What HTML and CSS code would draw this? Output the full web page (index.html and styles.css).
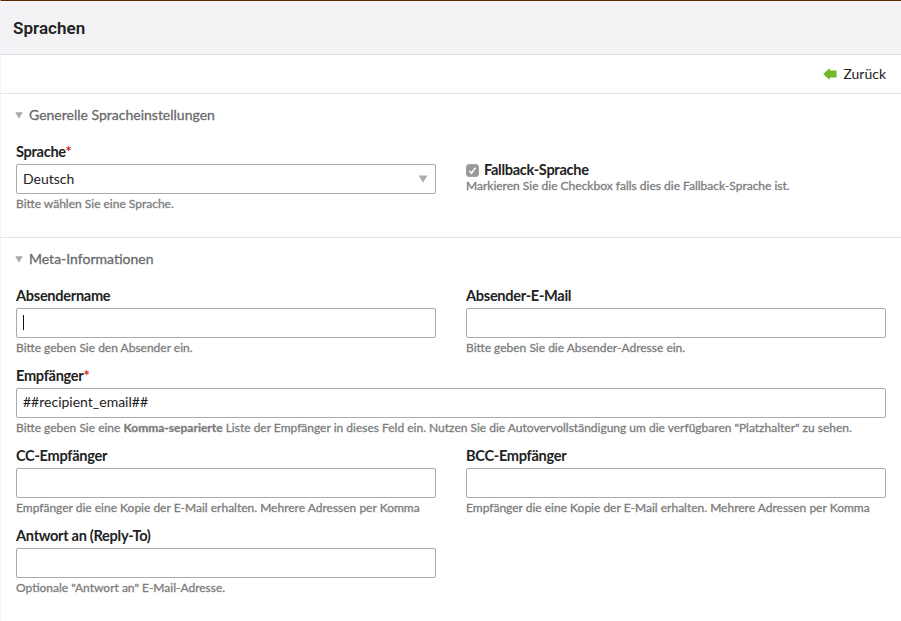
FILE: index.html
```html
<!DOCTYPE html>
<html lang="de">
<head>
<meta charset="utf-8">
<title>Sprachen</title>
<link rel="stylesheet" href="styles.css">
</head>
<body>
<main class="main">
  <h1 class="headline">Sprachen</h1>
  <nav class="buttons">
    <a class="back"><svg width="14" height="12" viewBox="0 0 14 12"><path d="M0.2 6 6.8 0V2.5h6.8v7H6.8v2.5z" fill="#72b82f"/></svg><span>Zurück</span></a>
  </nav>
  <form>
    <section class="box box-general">
      <h2 class="legend"><svg class="caret" width="8" height="7" viewBox="0 0 8 7"><path d="M.3.3h7.4L4 6.7z" fill="#a8a8a8"/></svg><span>Generelle Spracheinstellungen</span></h2>
      <div class="fields">
        <div class="widget">
          <label class="label">Sprache<span class="req">*</span></label>
          <div class="control select"><span>Deutsch</span><svg width="10" height="8" viewBox="0 0 10 8"><path d="M.6.5h8.8L5 7.7z" fill="#acacac"/></svg></div>
          <p class="help">Bitte wählen Sie eine Sprache.</p>
        </div>
        <div class="widget check">
          <div class="check-row"><svg width="13" height="13" viewBox="0 0 13 13"><rect x=".5" y=".5" width="12" height="12" rx="2.5" fill="#98989a" stroke="#a4a4a6"/><path d="M3.4 6.8 5.5 9.2 9.5 3.6" fill="none" stroke="#fff" stroke-width="1.6"/></svg><label class="label">Fallback-Sprache</label></div>
          <p class="help">Markieren Sie die Checkbox falls dies die Fallback-Sprache ist.</p>
        </div>
      </div>
    </section>
    <section class="box">
      <h2 class="legend"><svg class="caret" width="8" height="7" viewBox="0 0 8 7"><path d="M.3.3h7.4L4 6.7z" fill="#a8a8a8"/></svg><span>Meta-Informationen</span></h2>
      <div class="fields">
        <div class="widget">
          <label class="label">Absendername</label>
          <div class="control"><span class="cursor"></span></div>
          <p class="help">Bitte geben Sie den Absender ein.</p>
        </div>
        <div class="widget">
          <label class="label">Absender-E-Mail</label>
          <div class="control"></div>
          <p class="help">Bitte geben Sie die Absender-Adresse ein.</p>
        </div>
        <div class="widget wide">
          <label class="label">Empfänger<span class="req">*</span></label>
          <div class="control text">##recipient_email##</div>
          <p class="help">Bitte geben Sie eine <strong>Komma-separierte</strong> Liste der Empfänger in dieses Feld ein. Nutzen Sie die Autovervollständigung um die verfügbaren "Platzhalter" zu sehen.</p>
        </div>
        <div class="widget">
          <label class="label">CC-Empfänger</label>
          <div class="control"></div>
          <p class="help">Empfänger die eine Kopie der E-Mail erhalten. Mehrere Adressen per Komma</p>
        </div>
        <div class="widget">
          <label class="label">BCC-Empfänger</label>
          <div class="control"></div>
          <p class="help">Empfänger die eine Kopie der E-Mail erhalten. Mehrere Adressen per Komma</p>
        </div>
        <div class="widget">
          <label class="label">Antwort an (Reply-To)</label>
          <div class="control"></div>
          <p class="help">Optionale "Antwort an" E-Mail-Adresse.</p>
        </div>
      </div>
    </section>
  </form>
</main>
</body>
</html>
```
FILE: styles.css
```css
* { box-sizing: border-box; }
body {
  margin: 0;
  height: 621px;
  overflow: hidden;
  background: #fff;
  border-top: 1px solid #5c2800;
  border-left: 1px solid #f0f3fe;
  font: 14px/20px Lato, sans-serif;
  color: #222;
}
h1, h2, p { margin: 0; }
.headline {
  height: 54px;
  padding-left: 12px;
  background: #f3f3f5;
  border-bottom: 1px solid #dedee0;
  border-top-left-radius: 3px;
  font: 600 17px/54px Roboto, sans-serif;
  letter-spacing: .05px;
}
.buttons {
  height: 39px;
  padding-right: 15px;
  border-bottom: 1px solid #e4e4e6;
  display: flex;
  justify-content: flex-end;
}
.back { display: flex; align-items: center; gap: 6px; }
.box { padding: 11px 15px 0; }
.box-general { height: 144px; border-bottom: 1px solid #e4e4e6; }
.legend {
  display: flex;
  align-items: center;
  gap: 6px;
  height: 20px;
  font-size: 14px;
  font-weight: 400;
  color: #6a6a6c;
  -webkit-text-stroke: .3px;
}
.caret { margin-left: -1px; }
.fields {
  display: grid;
  grid-template-columns: 420px 420px;
  column-gap: 30px;
  padding-top: 17px;
}
.widget { height: 80px; }
.wide { grid-column: 1 / 3; }
.label {
  display: block;
  height: 22px;
  font-size: 14.6px;
  line-height: 20px;
  font-weight: 700;
  letter-spacing: -.31px;
  white-space: nowrap;
}
.req { color: #d22; }
.control {
  height: 30px;
  padding: 0 7px 0 6px;
  border: 1px solid #aaa;
  border-radius: 2px;
  line-height: 28px;
  display: flex;
  align-items: center;
}
.text { padding-bottom: 2px; }
.select { justify-content: space-between; }
.cursor { width: 1px; height: 15px; margin-bottom: 1px; background: #111; }
.help {
  padding-top: 3px;
  font-size: 12px;
  line-height: 14px;
  color: #7c7c7c;
  white-space: nowrap;
  -webkit-text-stroke: .3px;
}
.check { padding-top: 19px; }
.check-row { display: flex; align-items: center; gap: 5px; height: 18px; }
.check-row .label { height: 20px; }
.check .help { padding-top: 0; }
```
